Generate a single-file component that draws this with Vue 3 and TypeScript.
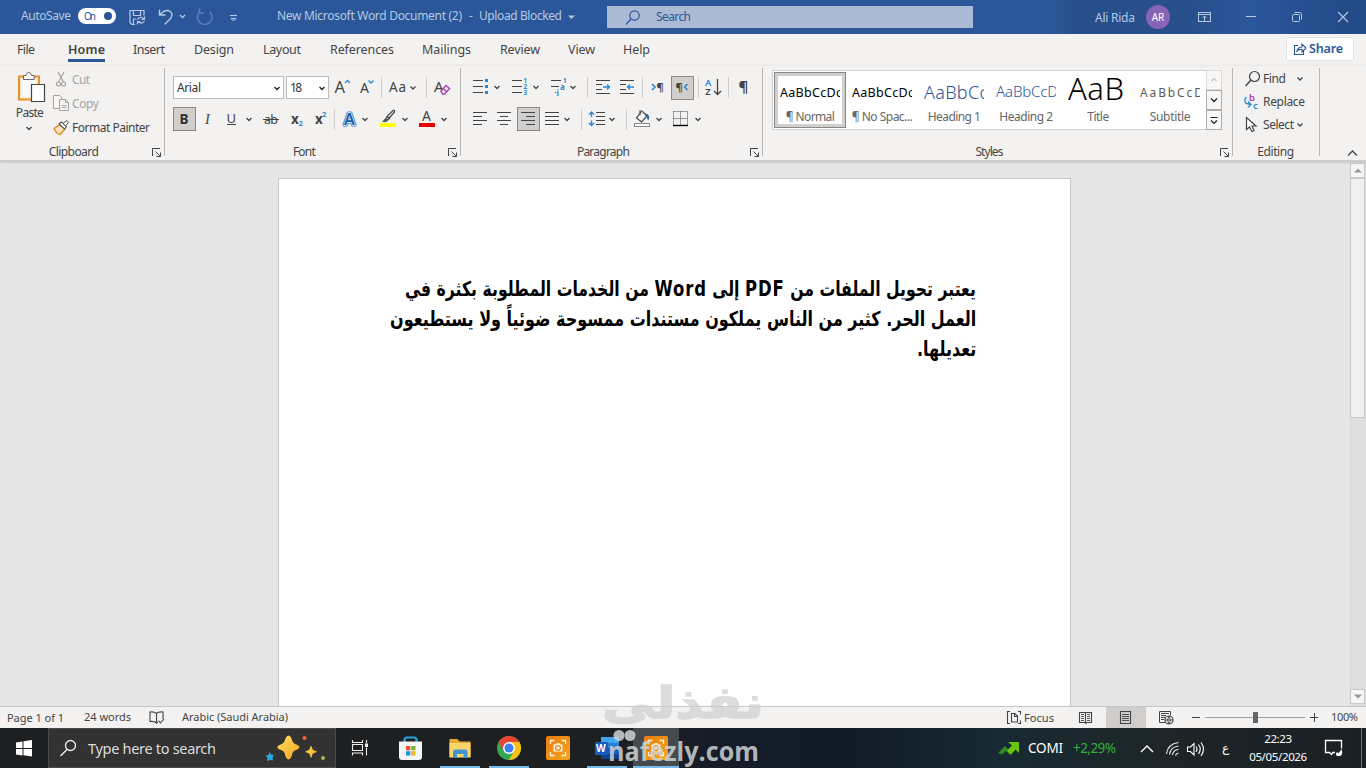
<script setup lang="ts">
import { h, type Directive, type FunctionalComponent } from 'vue'

type Box = [number, number, number, number]
type Tool = { box: Box; art: string; on?: boolean }

/* Sets a label to the given width in pixels, by tracking or (for joined scripts) by scale. */
const vFit: Directive<HTMLElement, number> = {
  mounted(el, { value, modifiers }) {
    const natural = modifiers.scale ? el.offsetWidth : measure(el)
    const count = (el.textContent ?? '').trim().length
    if (modifiers.scale) el.style.transform = `scaleX(${value / natural})`
    else el.style.letterSpacing = `${(value - natural) / Math.max(1, count - 1)}px`
  },
}
function measure(el: HTMLElement): number {
  const range = document.createRange()
  range.selectNodeContents(el)
  return range.getBoundingClientRect().width
}

const Art: FunctionalComponent<{ box: Box; art: string }> = (p) =>
  h('svg', { viewBox: p.box.join(' '), width: p.box[2], height: p.box[3], innerHTML: p.art })
Art.props = ['box', 'art']

const ink = '#444'
const blue = '#2b88d8'
const line = (d: string, c = ink, w = 1.2) => `<path d="${d}" fill="none" stroke="${c}" stroke-width="${w}"/>`
const chev = (x: number, y: number, c = ink) => line(`M${x + 0.5} ${y - 1.5}l2.500 2.500l2.500 -2.500`, c, 1.3)
const rule = (x: number, y: number) => line(`M${x}.5 ${y - 10}v21`, '#d0cecc', 1)
const word = (x: number, y: number, s: number, t: string, c = ink, extra = '') =>
  `<text x="${x}" y="${y}" font-size="${s}" fill="${c}" ${extra}>${t}</text>`

/* Lays tools side by side: each takes its width from the row's running position. */
const row = (x: number, y: number, list: [number, string, boolean?][]): Tool[] => {
  let at = x
  return list.map(([w, art, on]) => {
    const tool: Tool = { box: [at, y, w, 24], art, on }
    at += w
    return tool
  })
}

const fontTop = row(330, 76, [
  [26, word(334.500, 92.500, 16.5, 'A') + line('M345 83l2.5 -2.5l2.5 2.5', blue, 1.3)],
  [22, word(360, 92.500, 14, 'A') + line('M368.500 80.500l2.5 2.5l2.5 -2.5', blue, 1.3)],
  [8, rule(381, 87)],
  [34, word(389, 92, 13.5, 'Aa', ink, 'textLength="17"') + chev(410, 88)],
  [10, rule(426, 87)],
  [26, word(434, 92, 15, 'A') + '<path d="M441 91l5 -5.5l3.5 3l-5 5.5h-2z" fill="#f3f2f1" stroke="#a33fb5" stroke-width="1.4"/>' + line('M443 88.5l4 3.3', '#a33fb5')],
])

const fontBottom = row(173, 107, [
  [23, word(179.5, 123.500, 13.5, 'B', '#333', 'font-weight="700"'), true],
  [26, word(205, 123.5, 14.5, 'I', ink, 'font-style="italic" font-family="Liberation Serif, serif"')],
  [38, word(226.500, 122.5, 13, 'U') + line('M227 124.5h9', ink, 1) + chev(246, 119.500)],
  [28, word(264, 123.5, 12.5, 'ab', ink, 'textLength="14"') + line('M263 119.5h16', ink, 1)],
  [24, word(291, 123.5, 13.5, 'x', ink, 'font-weight="700"') + word(298.500, 126, 7.5, '2', blue, 'font-weight="700"')],
  [20, word(315, 123.5, 13.5, 'x', ink, 'font-weight="700"') + word(322, 116.5, 7.5, '2', blue, 'font-weight="700"')],
  [8, rule(334, 119)],
  [36, '<text x="344" y="124.500" font-size="16" font-weight="600" fill="#2b88d8" stroke="#2b7fd0" stroke-width="3.200" stroke-linejoin="round">A</text>' + '<text x="344" y="124.500" font-size="16" font-weight="600" fill="#1a5fa8" stroke="#e6f2fc" stroke-width="1.300" paint-order="stroke">A</text>' + chev(362, 119.5)],
  [38, '<rect x="380" y="123" width="16" height="4" fill="#ffff00"/>' + line('M385 121l2 -4.500l6 -6q2 -1 1.500 1.500l-6 7l-3 2zM387 116.500l3 2.500', ink, 1.2) + '<path d="M382 122l3.500 -4l3 2.500l-2.500 1.500z" fill="#555"/>' + chev(402, 119.5)],
  [38, word(422, 121, 14, 'A') + '<rect x="419" y="123" width="16" height="4" fill="#e80000"/>' + chev(441, 119.5)],
])

const bars = (x: number, ys: number[], w: number) => line(ys.map((y) => `M${x} ${y}.5h${w}`).join(''), ink, 1.1)

const paraTop = row(467, 76, [
  [39, bars(473, [80, 86, 92], 10) + `<path d="M485 79h3v3h-3zM485 85h3v3h-3zM485 91h3v3h-3z" fill="${blue}"/>` + chev(494, 87.5)],
  [39, bars(512, [80, 86, 92], 10) + word(523.5, 83, 6.2, '1', blue, 'font-weight="700"') + word(523.5, 89, 6.2, '2', blue, 'font-weight="700"') + word(523.5, 95, 6.2, '3', blue, 'font-weight="700"') + chev(533, 87.5)],
  [37, line('M551 80.5h10M551 86.500h8M556 92.500h-1', ink, 1.1) + word(563, 83, 6.2, '1', blue, 'font-weight="700"') + word(560, 90, 8, 'a', blue, 'font-weight="700"') + word(556.500, 96, 8, 'i', blue, 'font-weight="700"') + chev(570, 87.5)],
  [10, rule(587, 87)],
  [24, line('M596 80.5h14M596 93.5h14M596 84.5h6M596 89.5h6', ink, 1.1) + line('M603 87h6.500M607 84.500l2.500 2.500l-2.500 2.500', blue, 1.3)],
  [24, line('M620 80.5h14M620 93.5h14M620 84.5h6M620 89.5h6', ink, 1.1) + line('M627.500 87h6.500M630 84.500l-2.500 2.500l2.500 2.500', blue, 1.3)],
  [8, rule(642, 87)],
  [23, line('M652 84l3 3l-3 3', blue, 1.5) + word(656.500, 91, 11, '¶', ink, 'font-weight="700"')],
  [23, word(675.500, 91, 11, '¶', ink, 'font-weight="700"') + line('M687.500 84l-3 3l3 3', blue, 1.5), true],
  [8, rule(698, 87)],
  [28, word(705, 86, 9.5, 'A', blue, 'font-weight="600"') + word(705.300, 95, 9.5, 'Z', ink, 'font-weight="600"') + line('M717.500 79v15M714 91l3.500 3.500l3.500 -3.500', ink, 1.3)],
  [8, rule(728, 87)],
  [24, word(738.500, 92, 15, '¶', ink, 'font-weight="700"')],
])

const paraBottom = row(467, 107, [
  [24, line('M473 112.5h14M473 116.5h9M473 120.5h14M473 124.5h9', ink, 1.1)],
  [26, line('M497 112.5h14M500 116.5h8M497 120.5h14M500 124.5h8', ink, 1.1)],
  [23, line('M521 112.5h14M526 116.5h9M521 120.5h14M526 124.5h9', ink, 1.1), true],
  [36, line('M545 112.5h14M545 116.5h14M545 120.5h14M545 124.5h14', ink, 1.1) + chev(564, 119.5)],
  [10, rule(581, 119)],
  [36, line('M591.5 112v5M589 114.500l2.500 -2.500l2.500 2.500M591.500 120.500v5M589 123l2.500 2.500l2.500 -2.500', blue, 1.4) + line('M596 112.5h9M596 116.5h9M596 120.5h9M596 124.5h9', ink, 1.1) + chev(609, 119.5)],
  [10, rule(626, 119)],
  [37, line('M641 112l-4.500 6l5 4l5.500 -6l-5 -5h-2v4', ink, 1.2) + line('M645 114.500q4 0 3 5', '#1c6aa8', 2) + '<rect x="634.5" y="123.500" width="15" height="3" fill="#fff" stroke="#888"/>' + chev(656, 119.5)],
  [36, '<path d="M673.500 111.500h14M673.500 111.500v13M687.500 111.500v13M680.500 111.500v13M673.500 118.500h14" fill="none" stroke="#444" stroke-width="1" stroke-dasharray="1 1"/>' + line('M673 125.5h15', '#000', 1.4) + chev(695, 119.5)],
])

const art: Record<string, { box: Box; art: string }> = {
  save: { box: [129, 8, 18, 18], art: line('M135 24.500h-3l-2 -2v-12h14v5M133.500 10.500v5h7v-5M133.500 24v-5h3', '#b5c7e3') + line('M137.500 19.500q3 -4 6.500 -.5M144.500 16.500v3h-3M144.500 21q-3 4 -6.500 .5M137.500 24.500v-3h3', '#b5c7e3') },
  undo: { box: [157, 8, 30, 18], art: line('M159.500 9.500v5.500h6M160 14.500q5 -5.500 9.500 -3.500q4.500 3 1 7.500l-6 6', '#b5c7e3', 1.4) + chev(179.500, 16.500, '#b5c7e3') },
  redo: { box: [196, 8, 18, 18], art: line('M199.500 12a7.300 7.300 0 1 0 10.500 0M199.500 8.500v4.500h4.500', '#5f83bb', 1.4) },
  more: { box: [229, 10, 10, 12], art: line('M230 14.500h7', '#b5c7e3') + line('M231 17.500l2.500 2.500l2.500 -2.500z', '#b5c7e3', 1) },
  drop: { box: [567, 12, 10, 8], art: '<path d="M568 14.500h7l-3.500 3.500z" fill="#b5c7e3"/>' },
  seek: { box: [625, 8, 17, 17], art: '<circle cx="634.500" cy="14.500" r="4.700" fill="none" stroke="#2b579a" stroke-width="1.200"/>' + line('M631 18l-5 5.500', '#2b579a', 1.3) },
  ribbon: { box: [1197, 9, 16, 14], art: '<rect x="1198.500" y="11.500" width="12" height="9" fill="none" stroke="#b5c7e3"/>' + line('M1198 13.500h13M1204.500 20v-5M1202.500 17l2 -2l2 2', '#b5c7e3', 1) },
  min: { box: [1245, 9, 12, 14], art: line('M1246 15.500h10', '#b5c7e3', 1) },
  max: { box: [1291, 9, 12, 14], art: '<rect x="1292.500" y="13.500" width="7" height="7" rx="1" fill="none" stroke="#b5c7e3"/>' + line('M1294.500 11.500h5q2 0 2 2v5', '#b5c7e3', 1) },
  close: { box: [1337, 9, 12, 14], art: line('M1338 11l10 10M1348 11l-10 10', '#b5c7e3', 1.1) },
  paste: { box: [14, 71, 32, 32], art: '<path d="M19 76.500h20v23h-20z" fill="#fde8c8" stroke="#e8912d" stroke-width="2"/><path d="M21.500 79h15v18h-15z" fill="#fafafa"/><path d="M23.500 79.500v-4h2.500q.5 -3 2.800 -3q2.300 0 2.800 3h2.500v4z" fill="#fff" stroke="#666"/><path d="M31.500 84.500h13v17h-13z" fill="#fff" stroke="#444" stroke-width="1.200"/>' },
  pasteChev: { box: [24, 124, 9, 8], art: chev(25, 128.500) },
  cut: { box: [53, 72, 18, 16], art: line('M58 72l5.500 10M64 72l-5.500 10', '#a6a4a2', 1.3) + '<g fill="none" stroke="#a6a4a2" stroke-width="1.200"><circle cx="58.500" cy="84" r="2"/><circle cx="63.500" cy="84" r="2"/></g>' },
  copy: { box: [53, 95, 18, 18], art: '<g fill="#f7f6f5" stroke="#a6a4a2"><path d="M53.500 95.500h6l2 2v11h-8z"/><path d="M59.500 99.500h6l3 3v8h-9z"/></g>' + line('M65.500 99.500v3h3M61.500 105.500h5M61.500 107.500h5', '#a6a4a2', 1) },
  brush: { box: [53, 119, 18, 16], art: '<path d="M54 127.500l6 -4l5 4.500l-5 5.500q-4 -1 -6 -6z" fill="#fde2b8" stroke="#e8821d" stroke-width="1.300"/><path d="M59 123l2.500 -2l5 4.500l-2 2.500z" fill="#fff" stroke="#555" stroke-width="1.100"/><path d="M63.500 122l3.500 -2.500l1.500 1.500l-2.500 3.500" fill="#fff" stroke="#555"/>' },
  caret: { box: [273, 84, 9, 8], art: line('M274.500 87l2.500 2.500l2.500 -2.500', '#222', 1.4) },
  launch: { box: [0, 0, 10, 10], art: line('M.5 8v-7.500h7.500M3.500 3.500l5 5M8.500 4.500v4h-4', ink, 1) },
  share: { box: [1294, 43, 14, 14], art: line('M1298 46.500h-3.500v9h9v-3.500', '#2b579a', 1.1) + line('M1297 52q1 -4 5 -4v-3l4 4l-4 4v-2.500q-3 -.5 -5 1.500z', '#2b579a', 1.1) },
  find: { box: [1244, 69, 18, 18], art: '<circle cx="1254.500" cy="75.500" r="5" fill="none" stroke="#444" stroke-width="1.200"/>' + line('M1251 79l-5.500 6', ink, 1.4) },
  replace: { box: [1244, 93, 18, 18], art: word(1249, 101, 9.5, 'b', '#a33fb5', 'font-weight="600"') + word(1253, 109, 9.5, 'c', blue, 'font-weight="600"') + line('M1246.500 97q-3 3 -.5 6.500l4.500 1M1248 101.500l3 3l-3 3', blue, 1.3) },
  select: { box: [1244, 116, 18, 18], art: '<path d="M1246.500 117.500v12l3 -2.500l2.500 4.500l2 -1l-2 -4.500h4z" fill="#fff" stroke="#444" stroke-width="1.200"/>' },
  smallChev: { box: [0, 0, 8, 8], art: chev(1, 4) },
  up: { box: [0, 0, 8, 6], art: line('M1.500 4l2.500 -2.500l2.500 2.500', '#a8a6a4', 1) },
  down: { box: [0, 0, 8, 6], art: line('M1 1.500l3 3l3 -3', '#222', 1.300) },
  all: { box: [0, 0, 8, 9], art: line('M.5 1.500h7M1 4.500l3 3l3 -3', '#222', 1.200) },
  collapse: { box: [1347, 148, 12, 9], art: line('M1348 155.500l4.500 -4.500l4.500 4.500', '#444', 1.300) },
  scrollUp: { box: [0, 0, 8, 5], art: '<path d="M0 4.500l4 -4l4 4z" fill="#999"/>' },
  scrollDown: { box: [0, 0, 8, 5], art: '<path d="M0 .5l4 4l4 -4z" fill="#999"/>' },
  proof: { box: [149, 710, 16, 15], art: line('M156.500 713.500q-2 -2 -6.500 -1.500v9.500q4.500 -.5 6.500 1.500zM156.500 713.500q2 -2 6.500 -1.500v7M156.500 723l1.500 -1M158.500 720.500l2 2.500l3.500 -4', ink, 1.1) },
  focus: { box: [1006, 709, 16, 16], art: line('M1010 710.500h-2.500v12h2.500M1018 710.500h2.500v3M1018 722.500h2.500v-3M1011.500 712.500h3.500l2.500 2.500v6h-6zM1014.500 712.500v3h3', ink, 1.1) },
  read: { box: [1078, 709, 15, 15], art: line('M1085.500 711.500h-6v10h6l.5 1l.5 -1h5v-10h-5.500zM1085.500 711.500v11', ink, 1.1) + line('M1081 713.500h3M1081 715.500h3M1081 717.500h3M1081 719.500h3M1087 713.500h3M1087 715.500h3M1087 717.500h3M1087 719.500h3', ink, .9) },
  print: { box: [1119, 709, 14, 16], art: line('M1120.500 710.500h10v12h-10z', ink, 1.1) + line('M1122 713.500h7M1122 715.500h7M1122 717.500h7M1122 719.500h7', ink, .9) },
  web: { box: [1158, 709, 16, 16], art: line('M1165 721.500h-5.500v-11h11v4M1161 712.500h8M1161 714.500h5M1161 716.500h4M1161 718.500h3', ink, 1) + '<circle cx="1169" cy="719" r="4" fill="#f3f2f1" stroke="#444" stroke-width="1.200"/>' + line('M1165 719h8M1169 715q-3 4 0 8q3 -4 0 -8', ink, .9) },
  windows: { box: [16, 740, 17, 17], art: '<path d="M16 742.500l6.500 -1v6.500h-6.500zM23.500 741.300l8.500 -1.300v8h-8.500zM16 749h6.500v6.500l-6.500 -1zM23.500 749h8.500v7.500l-8.500 -1.200z" fill="#fff"/>' },
  glass: { box: [59, 739, 19, 18], art: '<circle cx="70.500" cy="745.500" r="5" fill="none" stroke="#eee" stroke-width="1.300"/>' + line('M67 749.500l-6.500 6.500', '#eee', 1.400) },
  sparks: { box: [264, 734, 64, 28], art: '<defs><linearGradient id="gold" x1="0" y1="0" x2="1" y2="1"><stop offset="0" stop-color="#ffdf62"/><stop offset="1" stop-color="#f3a51c"/></linearGradient></defs><path d="M288.500 735.500q2.500 0 4 6q1 2 5 3.500q4 2 0 4.500q-4 1 -5 3.500q-1.500 6.500 -4 6.500t-4 -6.500q-1 -2.500 -5 -3.500q-4.500 -2.500 0 -4.500q4 -1.500 5 -3.500q1.500 -6 4 -6z" fill="url(#gold)"/><path d="M311 746l1.500 4l4 1.700l-4 1.800l-1.500 4l-1.500 -4l-4 -1.800l4 -1.700z" fill="url(#gold)" stroke="#ffc845" stroke-width=".6"/><path d="M269.500 752l1.500 2.500l3 .5l-1.500 2.500l.5 3l-3 -.5l-3 1l.5 -3l-2 -2.500l3 -.5z" fill="#29a8e8"/><circle cx="304.500" cy="738" r="2" fill="#ed6a32"/><circle cx="323" cy="758" r="2" fill="#9bbf4b"/>' },
  tasks: { box: [351, 739, 18, 17], art: line('M352.500 740v2.500h10v-2.500M352.500 755.500v-2.500h10v2.500M352.500 744.500h10v6h-10zM366.500 740v3M366.500 747.500v8', '#eee', 1.100) + '<path d="M365 743.500h3v3.500h-3z" fill="#eee"/>' },
  store: { box: [399, 735, 24, 25], art: line('M404.500 743v-3q0 -2.500 2.500 -2.500h7q2.500 0 2.500 2.500v3', '#2ba3e0', 2.200) + '<path d="M399 741.500h23v15.500q0 3 -3 3h-17q-3 0 -3 -3z" fill="#f4f5f6"/><path d="M406 746h4.300v4.300h-4.300z" fill="#e2532f"/><path d="M411.200 746h4.300v4.300h-4.300z" fill="#78b72c"/><path d="M406 751.200h4.300v4.300h-4.300z" fill="#1a95d6"/><path d="M411.200 751.200h4.300v4.300h-4.300z" fill="#f2b51b"/>' },
  files: { box: [448, 736, 24, 24], art: '<path d="M449.500 739h8l2 2.500h11v15.500h-21z" fill="#e6ab2f"/><path d="M449.500 743h21v14.500h-21z" fill="#fbd56b"/><path d="M453 758v-6q0 -2.500 2.500 -2.500h9.500q2.500 0 2.500 2.500v6h-4v-4h-6.500v4z" fill="#3f96cf"/>' },
  chrome: { box: [497, 735, 25, 25], art: '<circle cx="509" cy="748" r="12" fill="#34a853"/><path d="M498.600 742a12 12 0 0 1 20.800 0l-10.400 0l-5.200 9z" fill="#ea4335"/><path d="M519.400 742a12 12 0 0 1 -10.400 18l5.200 -9l-5.200 -9z" fill="#fbc116"/><circle cx="509" cy="748" r="6" fill="#fff"/><circle cx="509" cy="748" r="4.500" fill="#3c7df0"/>' },
  snap: { box: [0, 0, 24, 24], art: '<defs><linearGradient id="amber" x1="0" y1="0" x2="1" y2="1"><stop offset="0" stop-color="#e87c10"/><stop offset="1" stop-color="#f7a51d"/></linearGradient></defs><rect width="24" height="24" rx="2" fill="url(#amber)"/><path d="M4.500 8v-3.500h4M15.500 4.500h4v3.500M19.500 16v3.500h-4M8.500 19.500h-4v-3.500" fill="none" stroke="#fff3df" stroke-width="1.300"/><path d="M7.500 8.500h2l1 -1.300h3l1 1.300h2v7h-9z" fill="#fff5e6"/><circle cx="12" cy="12" r="2.400" fill="none" stroke="#ec8717" stroke-width="1.300"/>' },
  wordApp: { box: [594, 735, 26, 25], art: '<rect x="601" y="737" width="18" height="22" rx="1.500" fill="#2b7cd3"/><path d="M601 737h18v6h-18z" fill="#41a5ee"/><path d="M601 748h18v6h-18z" fill="#185abd"/><path d="M601 754h18v5h-18z" fill="#103f91"/><rect x="595" y="742" width="13" height="13" rx="1" fill="#185abd"/>' + word(596, 752, 10, 'W', '#fff', 'font-weight="700"') },
  trend: { box: [996, 740, 26, 16], art: '<path d="M998 753l7 -7l4 4l3 -3l3 3l-5 5l-4 -4l-4 3.500z" fill="#2c8c22"/><path d="M1008 742h11v11l-3.500 -3.500l-4.500 5l-4 -4l5 -5z" fill="#6ac50e"/>' },
  tray: { box: [1140, 742, 14, 10], art: line('M1141 751l6 -6l6 6', '#fff', 1.400) },
  wifi: { box: [1164, 740, 18, 16], art: line('M1166.500 754q1 -10 12 -11.500M1169.500 754.500q1 -7.500 9 -8.500M1172.500 755q.5 -5 6 -5.500M1175.500 755.500q.5 -2 3 -2.500', '#e6e6e6', 1.200) },
  sound: { box: [1186, 739, 20, 17], art: line('M1187.500 746v4.500h3l3.500 3.500v-11.500l-3.500 3.500zM1196 745.500q2 2.500 0 5.500M1198.500 743.500q3.500 4.500 0 9.500M1201 741.500q5 6.500 0 13.500', '#fff', 1.100) },
  notes: { box: [1324, 739, 20, 18], art: line('M1335 752.500h-2l-1.500 2l-2 -2h-4v-12h16v8', '#fff', 1.300) + '<path d="M1337 756q-2 -2 0 -4q1 2 2.500 0q1.500 -2 2 -3q2 5 -1 7z" fill="#fff"/>' },
}
const at = (name: string) => art[name]

const tabs: [string, number][] = [['File', 18], ['Home', 37], ['Insert', 32], ['Design', 40], ['Layout', 38], ['References', 64], ['Mailings', 49], ['Review', 40], ['View', 27], ['Help', 27]]
const styles = [
  { key: 'normal', sample: 'AaBbCcDc', name: '¶ Normal', w: 49, on: true },
  { key: 'nospace', sample: 'AaBbCcDc', name: '¶ No Spac...', w: 61 },
  { key: 'h1', sample: 'AaBbCc', name: 'Heading 1', w: 53 },
  { key: 'h2', sample: 'AaBbCcD', name: 'Heading 2', w: 54 },
  { key: 'title', sample: 'AaB', name: 'Title', w: 22 },
  { key: 'sub', sample: 'AaBbCcD', name: 'Subtitle', w: 41 },
]
const sampleWidth: Record<string, number> = { normal: 62, nospace: 62, h1: 64, h2: 62, title: 56, sub: 63 }
const lines: [string, number][] = [
  ['يعتبر تحويل الملفات من PDF إلى Word من الخدمات المطلوبة بكثرة في', 571],
  ['العمل الحر. كثير من الناس يملكون مستندات ممسوحة ضوئياً ولا يستطيعون', 586],
  ['تعديلها.', 59],
]
const runs = (text: string) => text.split(/([A-Za-z]+)/)
</script>

<template>
  <div class="desktop">
    <header class="titlebar">
      <span v-fit="50">AutoSave</span>
      <span class="toggle"><span v-fit="12">On</span><i></i></span>
      <Art v-bind="at('save')" /><Art v-bind="at('undo')" /><Art v-bind="at('redo')" /><Art v-bind="at('more')" />
      <span v-fit="185">New Microsoft Word Document (2)</span>
      <span>-</span>
      <span v-fit="83">Upload Blocked</span>
      <Art v-bind="at('drop')" />
      <div class="finder"><Art v-bind="at('seek')" /><span v-fit="35">Search</span></div>
      <span v-fit="40" class="user">Ali Rida</span>
      <span class="avatar">AR</span>
      <Art v-bind="at('ribbon')" /><Art v-bind="at('min')" /><Art v-bind="at('max')" /><Art v-bind="at('close')" />
    </header>

    <nav class="tabs">
      <span v-for="[t, w] in tabs" :key="t" class="tab" :class="{ current: t === 'Home' }"><span v-fit="w">{{ t }}</span></span>
      <button class="share"><Art v-bind="at('share')" /><span v-fit="34">Share</span></button>
    </nav>

    <section class="ribbon">
      <div class="group clipboard">
        <div class="body">
          <div class="paste"><Art v-bind="at('paste')" /><span v-fit="28">Paste</span><Art v-bind="at('pasteChev')" /></div>
          <div class="clips">
            <div class="off"><Art v-bind="at('cut')" /><span v-fit="18">Cut</span></div>
            <div class="off"><Art v-bind="at('copy')" /><span v-fit="27">Copy</span></div>
            <div><Art v-bind="at('brush')" /><span v-fit="78">Format Painter</span></div>
          </div>
        </div>
        <footer><span v-fit="50">Clipboard</span><Art class="launch" v-bind="at('launch')" /></footer>
      </div>

      <div class="group font">
        <div class="body rows">
          <div class="tools">
            <div class="combo family"><span v-fit="24">Arial</span><Art v-bind="at('caret')" /></div>
            <div class="combo size"><span v-fit="12">18</span><Art v-bind="at('caret')" /></div>
            <Art v-for="(t, i) in fontTop" :key="i" :box="t.box" :art="t.art" />
          </div>
          <div class="tools"><Art v-for="(t, i) in fontBottom" :key="i" :box="t.box" :art="t.art" :class="{ on: t.on }" /></div>
        </div>
        <footer><span v-fit="23">Font</span><Art class="launch" v-bind="at('launch')" /></footer>
      </div>

      <div class="group para">
        <div class="body rows">
          <div class="tools"><Art v-for="(t, i) in paraTop" :key="i" :box="t.box" :art="t.art" :class="{ on: t.on }" /></div>
          <div class="tools"><Art v-for="(t, i) in paraBottom" :key="i" :box="t.box" :art="t.art" :class="{ on: t.on }" /></div>
        </div>
        <footer><span v-fit="53">Paragraph</span><Art class="launch" v-bind="at('launch')" /></footer>
      </div>

      <div class="group styles">
        <div class="gallery">
          <div v-for="s in styles" :key="s.key" class="style" :class="[s.key, { picked: s.on }]">
            <div class="sample"><span v-fit="sampleWidth[s.key]">{{ s.sample }}</span></div>
            <div class="name"><span v-fit="s.w">{{ s.name }}</span></div>
          </div>
          <div class="steps">
            <span class="dim"><Art v-bind="at('up')" /></span><span><Art v-bind="at('down')" /></span><span><Art v-bind="at('all')" /></span>
          </div>
        </div>
        <footer><span v-fit="28">Styles</span><Art class="launch" v-bind="at('launch')" /></footer>
      </div>

      <div class="group editing">
        <div class="edits">
          <div><Art v-bind="at('find')" /><span v-fit="23">Find</span><Art class="far" v-bind="at('smallChev')" /></div>
          <div><Art v-bind="at('replace')" /><span v-fit="42">Replace</span></div>
          <div><Art v-bind="at('select')" /><span v-fit="31">Select</span><Art class="near" v-bind="at('smallChev')" /></div>
        </div>
        <footer><span v-fit="37">Editing</span></footer>
      </div>
      <Art class="collapse" v-bind="at('collapse')" />
    </section>

    <main class="canvas">
      <article class="page" dir="rtl" lang="ar">
        <p v-for="[t, w] in lines" :key="t"><span v-fit.scale="w"><template v-for="(r, i) in runs(t)" :key="i"><b v-if="i % 2">{{ r }}</b><template v-else>{{ r }}</template></template></span></p>
      </article>
      <aside class="scroll">
        <span class="end"><Art v-bind="at('scrollUp')" /></span>
        <span class="thumb"></span>
        <span class="end"><Art v-bind="at('scrollDown')" /></span>
      </aside>
    </main>

    <div class="status">
      <span v-fit="57">Page 1 of 1</span>
      <span v-fit="47" class="high">24 words</span>
      <Art v-bind="at('proof')" />
      <span v-fit="106" class="high">Arabic (Saudi Arabia)</span>
      <Art v-bind="at('focus')" /><span v-fit="30">Focus</span>
      <Art v-bind="at('read')" />
      <span class="view"><Art v-bind="at('print')" /></span>
      <Art v-bind="at('web')" />
      <span class="sign minus"></span><span class="zoom"><i></i></span><span class="sign plus"></span>
      <span v-fit="27" class="high">100%</span>
    </div>

    <div class="taskbar">
      <div class="start"><Art v-bind="at('windows')" /></div>
      <div class="ask"><Art v-bind="at('glass')" /><span v-fit="128">Type here to search</span><Art class="sparks" v-bind="at('sparks')" /></div>
      <div class="app"><Art v-bind="at('tasks')" /></div>
      <div class="app"><Art v-bind="at('store')" /></div>
      <div class="app open"><Art v-bind="at('files')" /></div>
      <div class="app open"><Art v-bind="at('chrome')" /></div>
      <div class="app"><Art v-bind="at('snap')" /></div>
      <div class="app open"><Art v-bind="at('wordApp')" /></div>
      <div class="app open active"><Art v-bind="at('snap')" /></div>
      <div class="tray">
        <Art v-bind="at('trend')" /><span v-fit="35">COMI</span><span v-fit="43" class="gain">+2,29%</span>
        <Art v-bind="at('tray')" /><Art v-bind="at('wifi')" /><Art v-bind="at('sound')" />
        <span class="lang">ع</span>
        <div class="clock"><span v-fit="28">22:23</span><span v-fit="58">05/05/2026</span></div>
        <Art class="notes" v-bind="at('notes')" />
      </div>
    </div>

    <svg class="mark" viewBox="598 674 172 94" width="172" height="94">
      <text x="602" y="718" class="mark-ar" textLength="162" lengthAdjust="spacingAndGlyphs">نفذلى</text>
      <text x="608" y="761" class="mark-en" textLength="151" lengthAdjust="spacingAndGlyphs">nafezly.com</text>
      <g class="mark-dots"><circle cx="619" cy="735.500" r="5.500" /><circle cx="630" cy="735.500" r="5.500" /></g>
    </svg>
  </div>
</template>

<style>
html, body { margin: 0; overflow: hidden; }
</style>

<style scoped>
.desktop { position: relative; width: 1366px; height: 768px; display: flex; flex-direction: column; overflow: hidden; background: #e6e6e6; color: #444; font: 12px/16px "Noto Sans", "Open Sans", sans-serif; }
.desktop * { box-sizing: border-box; }
span { white-space: nowrap; }
svg { display: block; flex: none; overflow: visible; }
button { font: inherit; border: 0; padding: 0; }

.titlebar { height: 34px; flex: none; display: grid; grid-template-columns: 57px 51px 28px 39px 33px 48px 192px 10px 88px 40px 488px 51px 51px 48px 46px 46px 20px; padding-left: 21px; align-items: center; background: linear-gradient(90deg, #2b579a 0 1050px, #284f8c 1075px 1190px, #2b579a 1250px, #234b8a 1340px); color: #b5c7e3; }
.titlebar > span { padding-bottom: 2px; }
.titlebar .user { padding: 2px 0 0; }
.titlebar .toggle { width: 38px; height: 16px; margin-bottom: 2px; border-radius: 8px; background: #fff; color: #2b579a; display: flex; align-items: center; padding: 0 4px 0 6px; justify-content: space-between; font-size: 10px; }
.toggle i { width: 8px; height: 8px; border-radius: 50%; background: #2b579a; }
.finder { width: 366px; height: 22px; background: #abbbd5; color: #2b579a; display: flex; align-items: center; padding-left: 18px; gap: 14px; }
.titlebar .avatar { width: 24px; height: 24px; padding: 0; border-radius: 50%; background: #8764b8; color: #fff; font-size: 10px; text-align: center; line-height: 24px; }

.tabs { height: 32px; flex: none; background: #f3f2f1; display: grid; grid-template-columns: 51px 65px 61px 69px 67px 92px 78px 68px 55px 663px 68px; padding-left: 17px; align-items: center; font-size: 12.5px; }
.tab { height: 28px; padding-top: 8px; justify-self: start; margin-bottom: 4px; }
.tab.current { font-weight: 600; border-bottom: 3px solid #2b579a; }
.share { width: 68px; height: 24px; background: #fff; border: 1px solid #e4e2e0; border-radius: 2px; margin-bottom: 2px; color: #2b579a; font-weight: 600; display: flex; align-items: center; gap: 1px; padding-left: 7px; }

.ribbon { height: 95px; flex: none; background: #f3f2f1; display: flex; position: relative; z-index: 1; border-bottom: 1px solid #d0cfce; box-shadow: 0 1px 3px #bbb; }
.group { height: 94px; position: relative; display: flex; flex-direction: column; justify-content: space-between; }
.group::after { content: ""; position: absolute; right: 0; top: 2px; width: 1px; height: 88px; background: #bab8b7; }
.clipboard { width: 165px; }
.font { width: 296px; }
.para { width: 302px; }
.styles { width: 470px; }
.editing { width: 87px; }
footer { height: 16px; display: flex; justify-content: center; position: relative; }
.clipboard footer { padding-right: 18px; }
.font footer, .para footer { padding-right: 18px; }
.styles footer { padding-right: 18px; }
.editing footer { padding-right: 2px; }
.launch { position: absolute; right: 3px; top: 4px; }
.clipboard .body { display: flex; }
.paste { width: 53px; padding: 5px 0 0 6px; display: flex; flex-direction: column; align-items: center; }
.paste span { margin: 2px 0 3px; }
.clips { display: flex; flex-direction: column; }
.clips > div { display: flex; align-items: center; height: 24px; gap: 1px; }
.clips { padding-top: 2px; }
.off { color: #a6a4a2; }
.rows { display: flex; flex-direction: column; gap: 7px; padding-top: 10px; }
.font .rows { padding-left: 8px; }
.para .rows { padding-left: 6px; }
.tools { display: flex; height: 24px; }
.on { background: #d0cfcd; outline: 1px solid #8c8a88; outline-offset: -1px; }
.combo { height: 23px; background: #fff; border: 1px solid #bebcba; display: flex; align-items: center; justify-content: space-between; padding: 0 1px 0 3px; color: #333; }
.family { width: 111px; margin-right: 2px; }
.size { width: 43px; margin-right: 1px; }

.gallery { margin: 4px 0 0 9px; width: 450px; height: 60px; background: #fff; border: 1px solid #d2d0ce; display: flex; padding-left: 1px; }
.style { width: 72px; height: 56px; margin-top: 1px; padding: 8px 6px 0; color: #666; }
.picked { outline: 1px solid #8a8886; outline-offset: -1px; box-shadow: inset 0 0 0 4px #d2d0ce; }
.sample { width: 60px; height: 25px; margin-top: -2px; line-height: 29px; overflow: hidden; color: #000; font-size: 12.5px; }
.name { line-height: 16px; margin-top: 6px; display: flex; justify-content: center; margin-inline: -6px; }
.h1 .sample { font-size: 18px; font-weight: 300; color: #2f5496; }
.h2 .sample { font-size: 15px; font-weight: 300; color: #2f5496; line-height: 27px; }
.title .sample { font-size: 31px; font-weight: 300; line-height: 21px; }
.sub .sample { font-size: 12px; color: #5a5a5a; }
.steps { margin: -1px -1px -1px auto; width: 16px; display: flex; flex-direction: column; }
.steps > span { height: 20px; flex: 1; border: 1px solid #aeacaa; background: #f8f7f6; display: grid; place-items: center; }
.steps > .dim { border-color: #dcdad8; }

.edits { padding: 1px 0 0 11px; }
.edits > div { display: flex; align-items: center; height: 23px; gap: 1px; }
.far { margin-left: 9px; }
.near { margin-left: 1px; }
.collapse { margin: 82px 0 0 27px; }

.canvas { height: 545px; flex: none; display: flex; justify-content: space-between; background: #e6e6e6; }
.page { margin: 17px 0 0 278px; width: 793px; border: 1px solid #c6c6c6; border-bottom: 0; background: #fff; padding: 95px 94px 0 0; font: 700 20.5px/30px "DejaVu Sans", sans-serif; color: #000; }
.page p { margin: 0; height: 30px; white-space: nowrap; }
.page p > span { display: inline-block; transform-origin: right center; }
.page b { font-size: 21.5px; letter-spacing: 1.2px; line-height: 20px; }
.scroll { width: 16px; background: #dedede; display: flex; flex-direction: column; padding: 2px 1px 2px 0; }
.end { height: 15px; flex: none; background: #f6f6f6; border: 1px solid #c8c8c8; display: grid; place-items: center; }
.thumb { height: 240px; background: #f0f0f0; border: 1px solid #c8c8c8; margin-bottom: auto; }

.status { height: 22px; flex: none; background: #f3f2f1; border-top: 1px solid #c6c6c6; display: grid; grid-template-columns: 77px 65px 33px 824px 18px 54px 28px 52px 34px 13px 100px 26px 30px; padding-left: 7px; align-items: center; font-size: 11px; }
.status .high { padding-bottom: 2px; }
.view { width: 40px; height: 21px; background: #d0cecd; display: grid; place-items: center; }
.sign { position: relative; width: 8px; height: 9px; }
.sign::before { content: ""; position: absolute; left: 0; top: 4px; width: 8px; height: 1px; background: #444; }
.plus { margin-left: 5px; }
.plus::after { content: ""; position: absolute; left: 4px; top: 0; width: 1px; height: 9px; background: #444; }
.zoom { height: 11px; display: grid; place-items: center; background: linear-gradient(#a0a0a0, #a0a0a0) center / 100% 1px no-repeat; }
.zoom i { width: 5px; height: 11px; background: #666; }

.taskbar { height: 40px; flex: none; display: flex; background: linear-gradient(90deg, #1d1f21 0 650px, #131c27 720px, #111b28 850px, #182a32 1000px, #1d2629 1150px, #1b2024); color: #fff; }
.start { width: 48px; display: grid; place-items: center; }
.ask { width: 288px; background: #323232; border: 1px solid #4b4b4b; display: flex; align-items: center; padding-left: 10px; gap: 10px; font-size: 14.5px; color: #ddd; }
.sparks { margin-left: 38px; }
.app { width: 40px; margin-right: 9px; display: grid; place-items: center; border-bottom: 2px solid transparent; padding-top: 1px; }
.ask + .app { margin-left: 4px; margin-right: 11px; }
.open { border-color: #76b9ed; }
.app.active { width: 46px; margin-left: -3px; margin-right: 0; background: #454a4f; }
.tray { margin-left: auto; margin-right: 4px; width: 366px; display: grid; grid-template-columns: 32px 45px 67px 24px 22px 36px 22px 80px 30px; align-items: center; font-size: 13.5px; border-right: 1px solid #6d7174; }
.gain { color: #32b03c; }
.lang { font: 12px "DejaVu Sans", sans-serif; }
.clock { font-size: 11.5px; display: flex; flex-direction: column; align-items: center; line-height: 18px; width: 66px; margin-left: 1px; }

.mark { position: absolute; left: 598px; top: 674px; }
.mark-ar { font: 700 44px "DejaVu Sans", sans-serif; fill: #cfcfcf; stroke: #cfcfcf; stroke-width: 1.5px; opacity: .7; }
.mark-en { font: 700 27px "Open Sans", "Noto Sans", sans-serif; fill: #d0d2d4; fill-opacity: .85; }
.mark-dots { fill: #d0d2d4; fill-opacity: .85; }
</style>
